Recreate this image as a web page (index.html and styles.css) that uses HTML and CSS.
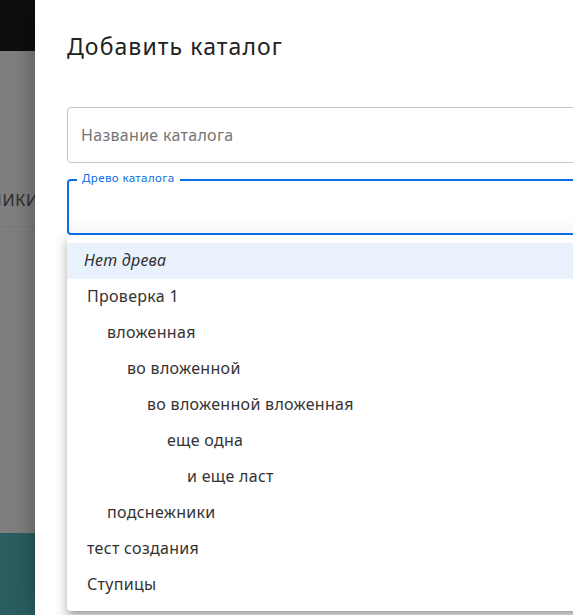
FILE: index.html
```html
<!DOCTYPE html>
<html lang="ru">
<head>
<meta charset="utf-8">
<link rel="stylesheet" href="styles.css">
</head>
<body>
<div class="page">
  <div class="backdrop">
    <div class="bd-top"></div>
    <div class="bd-mid">
      <div class="bd-tab"><span>ПОДСНЕЖНИКИ</span></div>
    </div>
    <div class="bd-bottom"></div>
  </div>
  <div class="drawer">
    <h1 class="title">Добавить каталог</h1>
    <div class="field">
      <span class="placeholder">Название каталога</span>
    </div>
    <div class="field focused">
      <span class="label">Древо каталога</span>
    </div>
    <ul class="menu">
      <li class="item selected"><em>Нет древа</em></li>
      <li class="item lvl0">Проверка 1</li>
      <li class="item lvl1">вложенная</li>
      <li class="item lvl2">во вложенной</li>
      <li class="item lvl3">во вложенной вложенная</li>
      <li class="item lvl4">еще одна</li>
      <li class="item lvl5">и еще ласт</li>
      <li class="item lvl1">подснежники</li>
      <li class="item lvl0">тест создания</li>
      <li class="item lvl0">Ступицы</li>
    </ul>
  </div>
</div>
</body>
</html>
```
FILE: styles.css
```css
* { box-sizing: border-box; }
html, body {
  margin: 0;
  padding: 0;
  width: 573px;
  height: 615px;
  overflow: hidden;
  font-family: "Noto Sans", "Open Sans", sans-serif;
}
.page {
  display: flex;
  width: 573px;
  height: 615px;
  overflow: hidden;
}
.backdrop {
  width: 35px;
  flex: none;
  display: flex;
  flex-direction: column;
  overflow: hidden;
}
.bd-top {
  height: 51px;
  background: #0e0e0e;
}
.bd-mid {
  flex: 1;
  background: #7f7f7f;
  padding-top: 124px;
}
.bd-tab {
  height: 52px;
  border-bottom: 1px solid #777777;
  display: flex;
  justify-content: flex-end;
  white-space: nowrap;
}
.bd-tab span {
  font-size: 16px;
  line-height: 50px;
  color: #2a2a2a;
  letter-spacing: 0.8px;
  margin-right: -4px;
}
.bd-bottom {
  height: 82px;
  background: #2b5e60;
}
.drawer {
  flex: none;
  width: 600px;
  background: #ffffff;
  padding: 29px 0 0 32px;
  box-shadow: 0 0 24px rgba(0,0,0,0.35);
  position: relative;
}
.title {
  margin: 0;
  font-weight: 400;
  font-size: 23px;
  line-height: 34px;
  color: #222222;
  letter-spacing: 1.1px;
}
.field {
  margin-top: 44px;
  width: 560px;
  height: 56px;
  border: 1px solid #c4c4c4;
  border-radius: 4px;
  padding-left: 13px;
  display: flex;
  align-items: center;
}
.placeholder {
  font-size: 16px;
  letter-spacing: 0.3px;
  color: #757575;
}
.field.focused {
  margin-top: 16px;
  border: 2px solid #0a6de6;
  padding-left: 12px;
  position: relative;
  background: linear-gradient(#ffffff 70%, #f6f6f6);
}
.label {
  position: absolute;
  top: -11px;
  left: 8px;
  padding: 0 5px;
  background: #ffffff;
  font-size: 11.5px;
  letter-spacing: 0.4px;
  line-height: 15px;
  color: #0a6de6;
}
.menu {
  list-style: none;
  margin: 0;
  padding: 8px 0 8px;
  width: 560px;
  background: #ffffff;
  border-radius: 4px;
  box-shadow: 0 5px 5px -3px rgba(0,0,0,0.2), 0 8px 10px 1px rgba(0,0,0,0.14), 0 3px 14px 2px rgba(0,0,0,0.12);
}
.item {
  height: 36px;
  line-height: 34px;
  font-size: 16px;
  letter-spacing: 0.3px;
  color: #333333;
  padding-left: 20px;
  white-space: nowrap;
}
.item.selected {
  background: #e9f1fc;
  padding-left: 17px;
}
.item em { font-style: italic; }
.lvl1 { padding-left: 40px; }
.lvl2 { padding-left: 60px; }
.lvl3 { padding-left: 80px; }
.lvl4 { padding-left: 100px; }
.lvl5 { padding-left: 120px; }
```
